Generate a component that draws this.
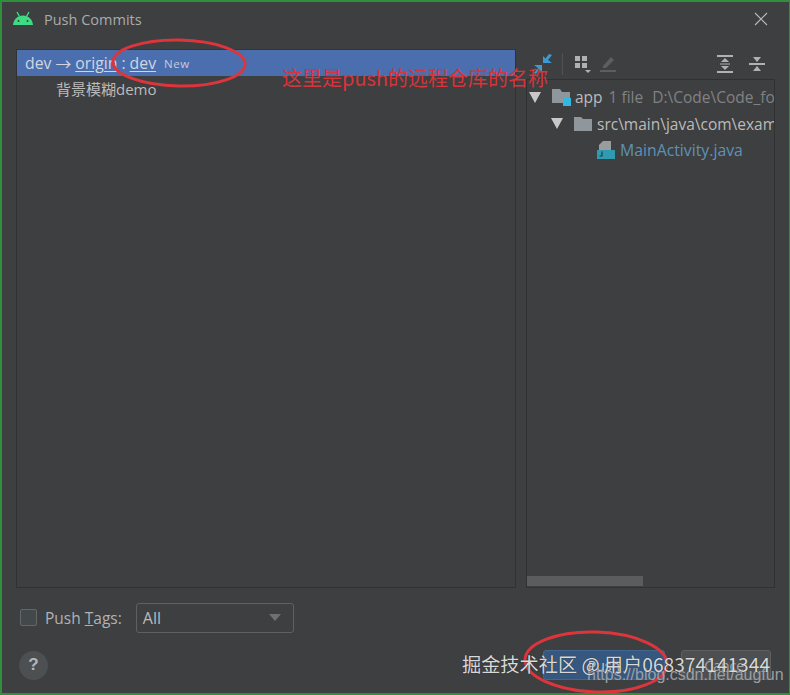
<script>
  // right hand tree of the push dialog
  const files = [
    { name: "app", depth: 0 },
    { name: "src\\main\\java\\com\\example", depth: 1 }
  ];
</script>

<div class="dialog">
  <header class="titlebar">
    <svg class="android" width="22" height="16" viewBox="0 0 22 16">
      <path d="M1 14 C1.5 8.5 5.5 4.5 11 4.5 C16.5 4.5 20.5 8.5 21 14 Z" fill="#3ddc84" />
      <path d="M5 1 L7.5 5.5 M17 1 L14.5 5.5" stroke="#3ddc84" stroke-width="1.4" />
      <circle cx="6.5" cy="10" r="1" fill="#3e3f41" />
      <circle cx="15.5" cy="10" r="1" fill="#3e3f41" />
    </svg>
    <span class="title">Push Commits</span>
    <svg class="close" width="14" height="14" viewBox="0 0 14 14">
      <path d="M1 1 L13 13 M13 1 L1 13" stroke="#bbb" stroke-width="1.1" />
    </svg>
  </header>

  <main class="split">
    <section class="commits">
      <div class="branch">
        <span>dev</span>
        <span class="arrow">→</span>
        <span class="link">origin</span>
        <span>:</span>
        <span class="link">dev</span>
        <span class="new">New</span>
      </div>
      <div class="commit">背景模糊demo</div>
    </section>

    <section class="changes">
      <div class="toolbar">
        <svg width="20" height="20" viewBox="0 0 20 20">
          <path d="M19 1 L15 6 L19 9 L10 9 L10 2 L12.5 4.5 L16 0 Z" fill="#3d9ad1" />
          <path d="M1 19 L5 14 L1 11 L9 11 L9 18 L6.5 15.5 L3 20 Z" fill="#3d9ad1" />
        </svg>
        <i class="sep"></i>
        <svg class="group" width="18" height="20" viewBox="0 0 18 20">
          <path d="M1 2 H6 V7 H1 Z M8 2 H13 V7 H8 Z M1 9 H6 V14 H1 Z M8 9 H13 V14 H8 Z" fill="#afb1b3" />
          <path d="M11 16 H17 L14 19 Z" fill="#afb1b3" />
        </svg>
        <svg class="edit" width="20" height="20" viewBox="0 0 20 20">
          <path d="M5 12 L13 3 L16 6 L8 14 L5 14 Z" fill="#5c5e60" />
          <path d="M2 17 H18" stroke="#5c5e60" stroke-width="2" />
        </svg>
        <span class="push"></span>
        <svg width="18" height="20" viewBox="0 0 18 20">
          <path d="M1 2 H17 M1 18 H17" stroke="#afb1b3" stroke-width="2" />
          <path d="M9 4 L13 8 H5 Z M9 16 L13 12 H5 Z" fill="#afb1b3" />
          <path d="M4 10 H14" stroke="#afb1b3" stroke-width="1" />
        </svg>
        <svg class="last" width="18" height="20" viewBox="0 0 18 20">
          <path d="M1 10 H17" stroke="#afb1b3" stroke-width="2" />
          <path d="M9 8 L13 3 H5 Z M9 12 L13 17 H5 Z" fill="#afb1b3" />
        </svg>
      </div>

      <div class="tree">
        <div class="rows">
          <div class="row">
            <span class="caret"></span>
            <svg class="folder" width="20" height="18" viewBox="0 0 20 18">
              <path d="M0 1 H8 L10 4 H18 V15 H0 Z" fill="#90979c" />
              <rect x="11" y="10" width="8" height="8" fill="#35b8e0" />
            </svg>
            <span class="name">{files[0].name}</span>
            <span class="dim">1 file</span>
            <span class="dim path">D:\Code\Code_for_android</span>
          </div>
          <div class="row sub">
            <span class="caret"></span>
            <svg class="folder" width="18" height="15" viewBox="0 0 18 15">
              <path d="M0 1 H7 L9 3 H18 V15 H0 Z" fill="#90979c" />
            </svg>
            <span class="name">{files[1].name}</span>
          </div>
          <div class="row leaf">
            <svg class="java" width="20" height="20" viewBox="0 0 20 20">
              <path d="M7 1 H15 V10 H3 V5 Z" fill="#9a9da0" />
              <rect x="1" y="10" width="18" height="9" fill="#2f9bb0" />
              <path d="M6 11.5 V16 H3.5" stroke="#1d3f4a" stroke-width="1.2" fill="none" />
            </svg>
            <span class="file">MainActivity.java</span>
          </div>
        </div>
        <div class="scrollbar"><div class="thumb"></div></div>
      </div>
    </section>
  </main>

  <div class="options">
    <label class="check"><input type="checkbox" /><span>Push <u>T</u>ags:</span></label>
    <div class="select">
      <span>All</span>
      <span class="down"></span>
    </div>
  </div>

  <footer class="footer">
    <button class="help">?</button>
    <div class="buttons">
      <button class="primary">Push</button>
      <button class="cancel">Cancel</button>
    </div>
  </footer>

  <!-- annotations drawn over the screenshot -->
  <svg class="marks" width="790" height="695" viewBox="0 0 790 695">
    <ellipse cx="179" cy="63" rx="66" ry="23" fill="none" stroke="#dc363c" stroke-width="3" transform="rotate(1 179 63)" />
    <ellipse cx="596" cy="662" rx="71" ry="30" fill="none" stroke="#dc363c" stroke-width="3" transform="rotate(2 596 662)" />
  </svg>
  <span class="note">这里是push的远程仓库的名称</span>
  <span class="mark-csdn">https://blog.csdn.net/augfun</span>
  <span class="mark-juejin">掘金技术社区 @ 用户068374141344</span>
</div>

<style>
  :global(body) {
    margin: 0;
    background: #3e3f41;
  }

  .dialog {
    position: relative;
    width: 790px;
    height: 695px;
    box-sizing: border-box;
    border: solid #2f8f3a;
    border-width: 2px 1px 2px 2px;
    background: #3e3f41;
    color: #bbbbbb;
    font-family: "Open Sans", "Noto Sans CJK SC", sans-serif;
    font-size: 15.5px;
    display: flex;
    flex-direction: column;
    overflow: hidden;
  }

  .titlebar {
    height: 34px;
    display: flex;
    align-items: center;
    padding: 0 21px 0 10px;
    flex: none;
  }

  .title {
    margin-left: 10px;
    font-size: 14.5px;
    color: #a9abad;
  }

  .close {
    margin-left: auto;
  }

  .split {
    flex: none;
    height: 539px;
    display: flex;
    margin-top: 13px;
    padding: 0 14px 0 14px;
    gap: 10px;
  }

  .commits {
    width: 500px;
    box-sizing: border-box;
    border: 1px solid #2f3133;
    border-top-color: #333537;
    flex: none;
  }

  .branch {
    height: 26px;
    background: #4b6eaf;
    color: #d0d6e0;
    display: flex;
    align-items: center;
    padding-left: 8px;
    gap: 4px;
    font-size: 15.8px;
  }

  .link {
    text-decoration: underline;
    text-underline-offset: 2px;
  }

  .new {
    font-size: 11.5px;
    margin-left: 1px;
    padding: 0 3px;
    letter-spacing: 0.5px;
    color: #c5ccd8;
  }

  .commit {
    padding: 2px 0 0 39px;
    font-size: 15px;
    color: #bbbbbb;
  }

  .changes {
    flex: 1;
    min-width: 0;
    display: flex;
    flex-direction: column;
  }

  .toolbar {
    height: 30px;
    flex: none;
    display: flex;
    align-items: center;
    padding-left: 7px;
    box-sizing: border-box;
  }

  .sep {
    width: 1px;
    height: 22px;
    background: #4f5254;
    margin: 0 11px 0 9px;
  }

  .edit {
    margin-left: 6px;
  }

  .push {
    flex: 1;
  }

  .last {
    margin: 0 9px 0 14px;
  }

  .tree {
    flex: 1;
    min-height: 0;
    border: 1px solid #2f3133;
    display: flex;
    flex-direction: column;
  }

  .rows {
    flex: 1;
    min-height: 0;
    overflow: hidden;
    padding-top: 4px;
  }

  .row {
    height: 26.5px;
    display: flex;
    align-items: center;
    white-space: nowrap;
    padding-left: 2px;
  }

  .row.sub {
    padding-left: 24px;
  }

  .row.sub .folder {
    margin-right: 5px;
  }

  .row.leaf {
    padding-left: 69px;
  }

  .caret {
    width: 0;
    height: 0;
    border-left: 6px solid transparent;
    border-right: 6px solid transparent;
    border-top: 11px solid #c8c8c8;
    margin-right: 11px;
    flex: none;
  }

  .folder {
    flex: none;
    margin-right: 3px;
  }

  .java {
    flex: none;
    margin-right: 4px;
  }

  .dim {
    color: #808284;
    margin-left: 6px;
  }

  .dim.path {
    margin-left: 9px;
  }

  .file {
    color: #5b93b8;
    font-size: 15.8px;
  }

  .scrollbar {
    height: 10px;
    flex: none;
    margin-bottom: 1px;
  }

  .thumb {
    width: 116px;
    height: 10px;
    background: #5a5c5e;
  }

  .options {
    margin-top: 15px;
    padding-left: 18px;
    display: flex;
    align-items: center;
    flex: none;
    height: 29px;
  }

  .check {
    display: flex;
    align-items: center;
    gap: 8px;
    color: #b0b2b4;
  }

  .check input {
    appearance: none;
    width: 17px;
    height: 17px;
    margin: 0;
    border: 1px solid #646769;
    border-radius: 2px;
    background: #43494a;
  }

  .select {
    margin-left: 14px;
    width: 158px;
    height: 30px;
    box-sizing: border-box;
    border: 1px solid #5e6062;
    border-radius: 3px;
    display: flex;
    align-items: center;
    justify-content: space-between;
    padding: 0 12px 0 6px;
    color: #bbbbbb;
    font-size: 16px;
  }

  .down {
    width: 0;
    height: 0;
    border-left: 6px solid transparent;
    border-right: 6px solid transparent;
    border-top: 7px solid #6e7072;
  }

  .footer {
    margin-top: 17px;
    padding: 0 18px 0 17px;
    height: 32px;
    flex: none;
    display: flex;
    align-items: center;
    justify-content: space-between;
  }

  .help {
    width: 29px;
    height: 29px;
    border-radius: 50%;
    border: none;
    background: #4c5052;
    color: #b4b6b8;
    font: 700 17px "Liberation Sans", sans-serif;
    padding: 0;
  }

  .buttons {
    display: flex;
    gap: 16px;
  }

  .buttons button {
    height: 30px;
    width: 90px;
    border-radius: 3px;
    font: 14px "Open Sans", sans-serif;
    padding: 0;
  }

  .primary {
    background: #365880;
    border: 1px solid #43688f;
    color: #c5ccd4;
    width: 122px !important;
  }

  .cancel {
    background: #4c5052;
    border: 1px solid #5e6060;
    color: #a8aaac;
  }

  .marks {
    position: absolute;
    left: -2px;
    top: -2px;
    pointer-events: none;
  }

  .note {
    position: absolute;
    left: 280px;
    top: 64px;
    font-size: 20px;
    line-height: 24px;
    color: #d8343a;
    white-space: nowrap;
    font-family: "Noto Sans CJK SC", sans-serif;
  }

  .mark-csdn {
    position: absolute;
    left: 585px;
    top: 664px;
    font: 16px/18px "Liberation Sans", sans-serif;
    color: #9a9fa4;
    white-space: nowrap;
  }

  .mark-juejin {
    position: absolute;
    left: 460px;
    top: 650px;
    font: 19.2px/24px "Noto Sans CJK SC", sans-serif;
    color: #d9d9d9;
    white-space: nowrap;
    text-shadow: 0 0 1px #222;
  }
</style>
